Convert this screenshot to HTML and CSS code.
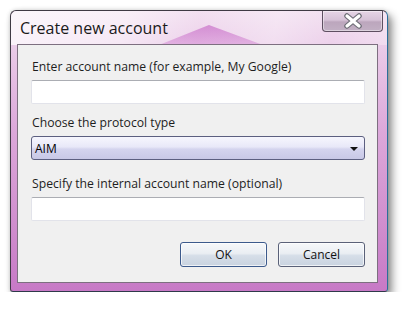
FILE: index.html
```html
<!DOCTYPE html>
<html>
<head>
<meta charset="utf-8">
<link rel="stylesheet" href="styles.css">
</head>
<body>
<div class="window">
  <div class="titlebar">
    <span class="title">Create new account</span>
    <button class="close" aria-label="Close">
      <svg width="20" height="16" viewBox="0 0 20 16">
        <path d="M4 3 L16 13 M16 3 L4 13" stroke="#6d6d76" stroke-width="5.5" stroke-linecap="round" fill="none"/>
        <path d="M4 3 L16 13 M16 3 L4 13" stroke="#ffffff" stroke-width="3.2" stroke-linecap="round" fill="none"/>
      </svg>
    </button>
  </div>
  <div class="content">
    <label class="label">Enter account name (for example, My Google)</label>
    <div class="input"></div>
    <label class="label">Choose the protocol type</label>
    <div class="select"><span>AIM</span><span class="arrow"></span></div>
    <label class="label third">Specify the internal account name (optional)</label>
    <div class="input"></div>
    <div class="buttons">
      <button class="btn ok">OK</button>
      <button class="btn">Cancel</button>
    </div>
  </div>
</div>
</body>
</html>
```
FILE: styles.css
```css
html, body {
  margin: 0;
  padding: 0;
  background: #ffffff;
}
body {
  font-family: "Open Sans", "Noto Sans", sans-serif;
}
.window {
  position: relative;
  margin: 10px 0 0 10px;
  box-sizing: content-box;
  width: 361px;
  height: 272px;
  border: 1px solid #3f3a44;
  border-right-color: #2a6f9a;
  border-bottom-color: #2f3a4a;
  border-radius: 6px 6px 3px 3px;
  padding: 0 9px 8px 6px;
  background: linear-gradient(180deg, #f1dcef 0px, #e9c9e7 40px, #dca8da 120px, #cf8ccd 220px, #c779c6 280px);
  box-shadow: 4px 5px 9px rgba(0,0,0,0.45), 0 0 4px rgba(0,0,0,0.15);
}
.window::before {
  content: "";
  position: absolute;
  left: 0;
  top: 0;
  width: 100%;
  height: 34px;
  border-radius: 6px 6px 0 0;
  background: linear-gradient(100deg, rgba(255,255,255,0.75) 0%, rgba(255,255,255,0.55) 30%, rgba(255,255,255,0.1) 50%, rgba(255,255,255,0.35) 70%, rgba(255,255,255,0.1) 85%, rgba(255,255,255,0.3) 100%);
  pointer-events: none;
}
.window::after {
  content: "";
  position: absolute;
  left: 148px;
  top: 14px;
  width: 104px;
  height: 20px;
  clip-path: polygon(0 100%, 48% 0, 100% 100%);
  background: linear-gradient(180deg, rgba(200,110,200,0.7), rgba(210,130,210,0.45));
  pointer-events: none;
}
.titlebar {
  position: relative;
  z-index: 1;
  height: 33px;
  display: flex;
  align-items: flex-start;
  justify-content: space-between;
}
.title {
  margin: 6px 0 0 3px;
  font-size: 16px;
  line-height: 22px;
  color: #1a1a1a;
}
.close {
  margin: 0 -5px 0 0;
  width: 61px;
  height: 21px;
  border: 1px solid #5e4f61;
  border-top: none;
  border-radius: 0 0 4px 4px;
  background: linear-gradient(180deg, #e6d5e6 0%, #d6c2d7 45%, #bca6bd 55%, #c2b0c4 100%);
  box-shadow: inset 0 0 0 1px rgba(255,255,255,0.45);
  padding: 0;
  display: flex;
  align-items: center;
  justify-content: center;
}
.close svg { display: block; margin-top: -1px; }
.content {
  position: relative;
  z-index: 1;
  box-sizing: border-box;
  height: 239px;
  background: #f0f0f0;
  border: 1px solid #7d6f80;
  padding: 14px 12px 0 13px;
  display: flex;
  flex-direction: column;
  font-size: 12.2px;
  color: #1e1e1e;
}
.label {
  display: block;
  line-height: 16px;
  height: 16px;
  margin-left: 1px;
}
.third { margin-top: 5px; }
.input {
  margin-top: 5px;
  margin-bottom: 11px;
  height: 22px;
  background: #ffffff;
  border: 1px solid #e2e3ea;
  border-top-color: #abadb3;
  border-radius: 2px;
  flex: none;
}
.select {
  margin-top: 5px;
  margin-bottom: 11px;
  height: 22px;
  border: 1px solid #5c5f80;
  border-radius: 3px;
  background: linear-gradient(180deg, #f6f6fd 0%, #e8e8f8 45%, #d4d4ee 55%, #c8c8e6 100%);
  display: flex;
  align-items: center;
  justify-content: space-between;
  padding: 0 6px 0 3px;
  font-size: 12px;
  color: #000;
  flex: none;
}
.arrow {
  width: 0;
  height: 0;
  border-left: 4px solid transparent;
  border-right: 4px solid transparent;
  border-top: 4px solid #111;
  margin-top: 1px;
}
.buttons {
  margin-top: 10px;
  display: flex;
  justify-content: flex-end;
  gap: 11px;
}
.btn {
  width: 87px;
  height: 25px;
  border: 1px solid #5a6178;
  border-radius: 3px;
  background: linear-gradient(180deg, #f6f8fa 0%, #eaeef3 45%, #d6dee8 55%, #c9d3e0 100%);
  box-shadow: inset 0 0 0 1px rgba(255,255,255,0.7);
  font-family: "Open Sans", "Noto Sans", sans-serif;
  font-size: 12px;
  color: #111;
  padding: 0;
}
.btn.ok {
  border-color: #3c5a8c;
}
```
